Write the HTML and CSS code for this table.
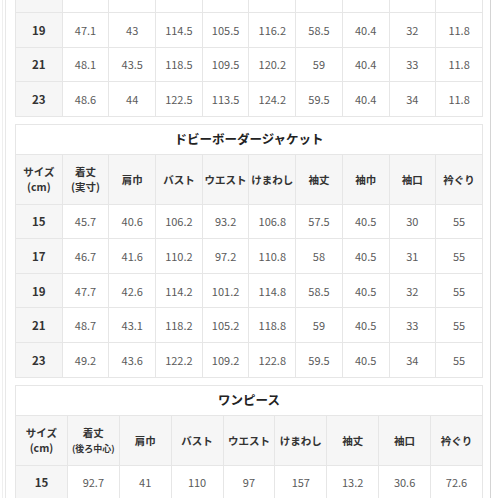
FILE: index.html
```html
<!DOCTYPE html>
<html lang="ja">
<head>
<meta charset="utf-8">
<link rel="stylesheet" href="styles.css">
</head>
<body>
<div class="outer">
<div class="inner">

<table class="size t10 first">
<tbody>
<tr class="clip"><th class="sz"></th><td></td><td></td><td></td><td></td><td></td><td></td><td></td><td></td><td></td></tr>
<tr><th class="sz">19</th><td>47.1</td><td>43</td><td>114.5</td><td>105.5</td><td>116.2</td><td>58.5</td><td>40.4</td><td>32</td><td>11.8</td></tr>
<tr><th class="sz">21</th><td>48.1</td><td>43.5</td><td>118.5</td><td>109.5</td><td>120.2</td><td>59</td><td>40.4</td><td>33</td><td>11.8</td></tr>
<tr><th class="sz">23</th><td>48.6</td><td>44</td><td>122.5</td><td>113.5</td><td>124.2</td><td>59.5</td><td>40.4</td><td>34</td><td>11.8</td></tr>
</tbody>
</table>

<table class="size t10">
<tbody>
<tr class="title"><th colspan="10">ドビーボーダージャケット</th></tr>
<tr class="head">
<th>サイズ<br>(cm)</th><th>着丈<br>(実寸)</th><th>肩巾</th><th>バスト</th><th>ウエスト</th><th>けまわし</th><th>袖丈</th><th>袖巾</th><th>袖口</th><th>衿ぐり</th>
</tr>
<tr><th class="sz">15</th><td>45.7</td><td>40.6</td><td>106.2</td><td>93.2</td><td>106.8</td><td>57.5</td><td>40.5</td><td>30</td><td>55</td></tr>
<tr><th class="sz">17</th><td>46.7</td><td>41.6</td><td>110.2</td><td>97.2</td><td>110.8</td><td>58</td><td>40.5</td><td>31</td><td>55</td></tr>
<tr><th class="sz">19</th><td>47.7</td><td>42.6</td><td>114.2</td><td>101.2</td><td>114.8</td><td>58.5</td><td>40.5</td><td>32</td><td>55</td></tr>
<tr><th class="sz">21</th><td>48.7</td><td>43.1</td><td>118.2</td><td>105.2</td><td>118.8</td><td>59</td><td>40.5</td><td>33</td><td>55</td></tr>
<tr><th class="sz">23</th><td>49.2</td><td>43.6</td><td>122.2</td><td>109.2</td><td>122.8</td><td>59.5</td><td>40.5</td><td>34</td><td>55</td></tr>
</tbody>
</table>

<table class="size t9">
<tbody>
<tr class="title"><th colspan="9">ワンピース</th></tr>
<tr class="head">
<th>サイズ<br>(cm)</th><th>着丈<br><span class="sub">(後ろ中心)</span></th><th>肩巾</th><th>バスト</th><th>ウエスト</th><th>けまわし</th><th>袖丈</th><th>袖口</th><th>衿ぐり</th>
</tr>
<tr><th class="sz">15</th><td>92.7</td><td>41</td><td>110</td><td>97</td><td>157</td><td>13.2</td><td>30.6</td><td>72.6</td></tr>
</tbody>
</table>

</div>
</div>
</body>
</html>
```
FILE: styles.css
```css
html, body {
  margin: 0;
  padding: 0;
  background: #ffffff;
  overflow: hidden;
  height: 498px;
}

body {
  font-family: "Noto Sans CJK JP", "Noto Sans", sans-serif;
  color: #555;
}

.outer {
  margin-left: 2px;
  width: 487px;
  border-left: 1px solid #efefef;
  border-right: 1px solid #d4d4d4;
  min-height: 600px;
}

.inner {
  margin-left: 2px;
  border-left: 1px solid #e8e8e8;
  padding-left: 9px;
  min-height: 600px;
}

.size {
  width: 468px;
  table-layout: fixed;
  border-collapse: collapse;
  margin-bottom: 7.4px;
  background: #fff;
}

.size.first {
  margin-top: -22.6px;
}

.size th,
.size td {
  border: 1px solid #e6e6e6;
  text-align: center;
  vertical-align: middle;
  padding: 0;
  line-height: 14px;
}

.size td {
  height: 33.6px;
  font-size: 11px;
  font-weight: 400;
  color: #5a5a5a;
}

.size th.sz {
  height: 33.6px;
  background: #f6f6f6;
  font-size: 11.5px;
  font-weight: 700;
  color: #333;
}

.size .title th {
  height: 28.5px;
  font-size: 12.5px;
  line-height: 16px;
  font-weight: 700;
  color: #222;
  background: #fff;
}

.size .head th {
  height: 49px;
  background: #f6f6f6;
  font-size: 10.5px;
  line-height: 15px;
  font-weight: 700;
  color: #333;
}

.size .head .sub {
  font-size: 9px;
}
```
